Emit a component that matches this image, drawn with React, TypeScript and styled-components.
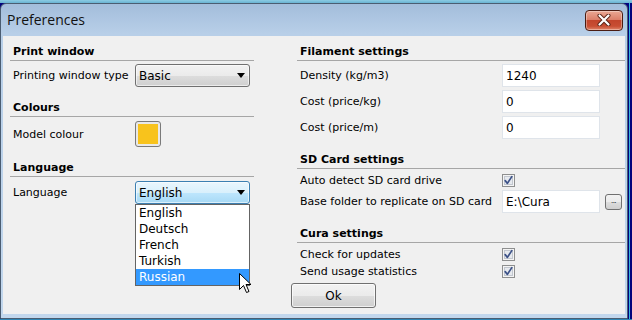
import React from 'react'
import styled, { createGlobalStyle } from 'styled-components'

const GlobalStyle = createGlobalStyle`
  html, body {
    margin: 0;
    padding: 0;
  }
  body {
    background: #03037c;
    font-family: "DejaVu Sans", Tahoma, sans-serif;
  }
`

const Desktop = styled.div`
  width: 632px;
  height: 320px;
  box-sizing: border-box;
  padding-top: 3px;
  overflow: hidden;
  background:
    linear-gradient(to bottom, #8ccbe3 0, #69b3d3 3px, transparent 3px),
    linear-gradient(to top, #2f86b5 0, #2f86b5 1px, transparent 1px),
    linear-gradient(to right, transparent 629px, #36b6e0 629px, #36b6e0 630px, transparent 630px),
    #03037c;
`

const Window = styled.div`
  width: 628px;
  height: 316px;
  box-sizing: border-box;
  border: 1px solid #4b5d72;
  border-radius: 6px 6px 0 0;
  background: linear-gradient(to bottom, #a3bddb 0, #b8cfe8 30px, #c2d7ed 100%);
  display: flex;
  flex-direction: column;
`

const TitleBar = styled.div`
  height: 32px;
  flex: none;
  display: flex;
  align-items: center;
  justify-content: space-between;
  padding: 0 4px 0 6px;
`

const Title = styled.span`
  font-family: "Open Sans", "Segoe UI", sans-serif;
  font-size: 14px;
  color: #111;
  margin-top: -2px;
`

const CloseButton = styled.div`
  width: 38px;
  height: 21px;
  box-sizing: border-box;
  border: 1px solid #4a1c12;
  border-radius: 4px;
  background: linear-gradient(to bottom, #eaa894 0, #dc806a 45%, #c2452c 50%, #c84e33 80%, #e0866a 100%);
  box-shadow: inset 0 0 0 1px rgba(255, 255, 255, 0.35);
  display: flex;
  align-items: center;
  justify-content: center;
`

const Client = styled.div`
  flex: 1;
  margin: 0 2px 4px 2px;
  background: #f0f0f0;
  display: flex;
  gap: 37px;
  padding: 8px 0 0 7px;
  font-size: 11px;
  color: #000;
`

const Column = styled.div<{ $width?: number }>`
  display: flex;
  flex-direction: column;
  ${p => (p.$width ? `width: ${p.$width}px;` : 'flex: 1;')}
`

const Heading = styled.div<{ $first?: boolean; $indent?: number }>`
  font-weight: bold;
  height: 16px;
  line-height: 16px;
  padding-left: 3px;
  margin-left: ${p => p.$indent || 0}px;
  margin-top: ${p => (p.$first ? 0 : 13)}px;
  margin-bottom: 3px;
  border-bottom: 1px solid #a6a6a6;
`

const Row = styled.div<{ $height: number; $top?: number; $indent?: number }>`
  display: flex;
  align-items: center;
  height: ${p => p.$height}px;
  margin-top: ${p => p.$top || 0}px;
  padding-left: ${p => p.$indent || 3}px;
`

const Label = styled.span<{ $width: number }>`
  width: ${p => p.$width}px;
  flex: none;
  white-space: nowrap;
`

const ComboWrap = styled.div`
  position: relative;
`

const Combo = styled.div<{ $open?: boolean }>`
  width: 115px;
  height: 23px;
  box-sizing: border-box;
  border: 1px solid ${p => (p.$open ? '#3c7fb1' : '#707070')};
  border-radius: 3px;
  background: ${p =>
    p.$open
      ? 'linear-gradient(to bottom, #eaf6fd 0, #d9f0fc 50%, #bee6fd 51%, #a7d9f5 100%)'
      : 'linear-gradient(to bottom, #f2f2f2 0, #ebebeb 50%, #dddddd 51%, #cfcfcf 100%)'};
  box-shadow: inset 0 0 0 1px rgba(255, 255, 255, 0.6);
  display: flex;
  align-items: center;
  justify-content: space-between;
  padding: 0 4px 0 3px;
  font-size: 12px;
`

const Arrow = styled.span`
  width: 0;
  height: 0;
  border-left: 4.5px solid transparent;
  border-right: 4.5px solid transparent;
  border-top: 5px solid #000;
`

const DropList = styled.div`
  position: absolute;
  top: 100%;
  left: 0;
  width: 115px;
  box-sizing: border-box;
  border: 1px solid #646464;
  background: #fff;
  z-index: 2;
`

const DropItem = styled.div<{ $selected?: boolean }>`
  height: 16px;
  line-height: 16px;
  padding-left: 3px;
  font-size: 12px;
  background: ${p => (p.$selected ? '#3399ff' : 'transparent')};
  color: ${p => (p.$selected ? '#fff' : '#000')};
`

const Pointer = styled.svg`
  position: absolute;
  left: 104px;
  top: 92px;
  z-index: 3;
`

const Swatch = styled.div<{ $color: string }>`
  width: 26px;
  height: 26px;
  box-sizing: border-box;
  border: 1px solid #7a7a7a;
  border-radius: 3px;
  padding: 2px;
  background: #e8e8e8;
  &::after {
    content: '';
    display: block;
    width: 100%;
    height: 100%;
    background: ${p => p.$color};
  }
`

const TextInput = styled.div`
  width: 98px;
  height: 23px;
  box-sizing: border-box;
  border: 1px solid #dfe4ea;
  background: #fff;
  padding-left: 3px;
  display: flex;
  align-items: center;
  font-size: 12px;
`

const BrowseButton = styled.div`
  width: 17px;
  height: 16px;
  box-sizing: border-box;
  margin-left: 5px;
  border: 1px solid #707070;
  border-radius: 3px;
  background: linear-gradient(to bottom, #f2f2f2 0, #ebebeb 50%, #dddddd 51%, #cfcfcf 100%);
  font-size: 7px;
  line-height: 12px;
  text-align: center;
  letter-spacing: -0.5px;
`

const OkButton = styled.div`
  width: 85px;
  height: 25px;
  box-sizing: border-box;
  margin-top: 4px;
  border: 1px solid #707070;
  border-radius: 3px;
  background: linear-gradient(to bottom, #f2f2f2 0, #ebebeb 50%, #dddddd 51%, #cfcfcf 100%);
  box-shadow: inset 0 0 0 1px rgba(255, 255, 255, 0.7);
  display: flex;
  align-items: center;
  justify-content: center;
  font-size: 12px;
`

const Check = () => (
  <svg width="13" height="13" viewBox="0 0 13 13">
    <rect x="0.5" y="0.5" width="12" height="12" fill="#f4f4f4" stroke="#8e8f8f" />
    <rect x="2.5" y="2.5" width="8" height="8" fill="#e6e9ee" stroke="#c2c7cf" />
    <path d="M3.2 6.6 L5.4 9.4 L9.8 2.6" fill="none" stroke="#3d5288" strokeWidth="1.7" strokeLinecap="round" strokeLinejoin="round" />
  </svg>
)

const languages = ['English', 'Deutsch', 'French', 'Turkish', 'Russian']

const App = () => {
  return (
    <Desktop>
      <GlobalStyle />
      <Window>
        <TitleBar>
          <Title>Preferences</Title>
          <CloseButton>
            <svg width="14" height="12" viewBox="0 0 14 12">
              <path d="M2.5 1.5 L11.5 10.5 M11.5 1.5 L2.5 10.5" stroke="#5a2417" strokeWidth="4" strokeLinecap="round" />
              <path d="M2.5 1.5 L11.5 10.5 M11.5 1.5 L2.5 10.5" stroke="#fff" strokeWidth="2.2" strokeLinecap="round" />
            </svg>
          </CloseButton>
        </TitleBar>
        <Client>
          <Column $width={244}>
            <Heading $first>Print window</Heading>
            <Row $height={23}>
              <Label $width={122}>Printing window type</Label>
              <Combo>
                <span>Basic</span>
                <Arrow />
              </Combo>
            </Row>

            <Heading>Colours</Heading>
            <Row $height={26} $top={1}>
              <Label $width={122}>Model colour</Label>
              <Swatch $color="#f8c31c" />
            </Row>

            <Heading>Language</Heading>
            <Row $height={23} $top={1}>
              <Label $width={122}>Language</Label>
              <ComboWrap>
                <Combo $open>
                  <span>English</span>
                  <Arrow />
                </Combo>
                <DropList>
                  {languages.map(l => (
                    <DropItem key={l} $selected={l === 'Russian'}>
                      {l}
                    </DropItem>
                  ))}
                </DropList>
                <Pointer width="13" height="21" viewBox="0 0 13 21">
                  <path d="M0.5 0.5 L0.5 16.5 L4.5 12.5 L7.5 19.5 L10 18.5 L7 11.5 L12 11.5 Z" fill="#fff" stroke="#000" strokeWidth="1" strokeLinejoin="round" />
                </Pointer>
              </ComboWrap>
            </Row>
          </Column>

          <Column>
            <Heading $first $indent={6}>Filament settings</Heading>
            <Row $height={23} $indent={9}>
              <Label $width={202}>Density (kg/m3)</Label>
              <TextInput>1240</TextInput>
            </Row>
            <Row $height={23} $top={3} $indent={9}>
              <Label $width={202}>Cost (price/kg)</Label>
              <TextInput>0</TextInput>
            </Row>
            <Row $height={23} $top={3} $indent={9}>
              <Label $width={202}>Cost (price/m)</Label>
              <TextInput>0</TextInput>
            </Row>

            <Heading $indent={6}>SD Card settings</Heading>
            <Row $height={16} $indent={9}>
              <Label $width={202}>Auto detect SD card drive</Label>
              <Check />
            </Row>
            <Row $height={23} $top={2} $indent={9}>
              <Label $width={202}>Base folder to replicate on SD card</Label>
              <TextInput>E:\Cura</TextInput>
              <BrowseButton>...</BrowseButton>
            </Row>

            <Heading $indent={6}>Cura settings</Heading>
            <Row $height={16} $indent={9}>
              <Label $width={202}>Check for updates</Label>
              <Check />
            </Row>
            <Row $height={16} $top={1} $indent={9}>
              <Label $width={202}>Send usage statistics</Label>
              <Check />
            </Row>
            <OkButton>Ok</OkButton>
          </Column>
        </Client>
      </Window>
    </Desktop>
  )
}

export default App
